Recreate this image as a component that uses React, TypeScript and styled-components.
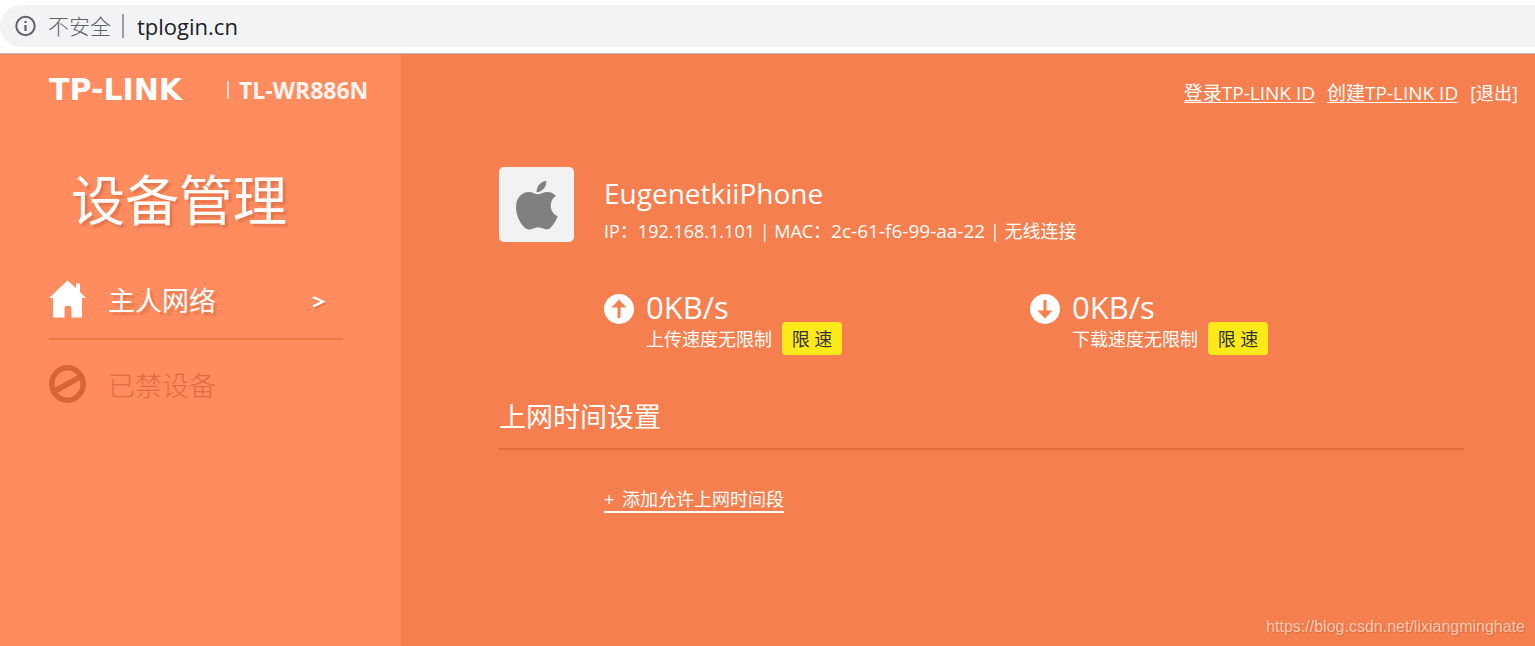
import React from "react";
import styled, { createGlobalStyle, css } from "styled-components";

const uiFont = '"Open Sans", "Noto Sans CJK SC", sans-serif';

const GlobalStyle = createGlobalStyle`
  *, *::before, *::after { box-sizing: border-box; }
  body {
    margin: 0;
    background: #fff;
    color: #fff;
    font-family: ${uiFont};
  }
  h1, h2, h3, p, ul { margin: 0; padding: 0; font-weight: 400; }
  ul { list-style: none; }
`;

const Page = styled.div`
  display: flex;
  flex-direction: column;
  min-height: 100vh;
`;

const BrowserBar = styled.header`
  padding: 5px 0 6px;
  border-bottom: 1px solid #b9bdc2;
`;

const AddressField = styled.div`
  display: flex;
  align-items: center;
  height: 42px;
  padding-left: 14px;
  border-radius: 21px 0 0 21px;
  background: #f1f3f5;
  color: #5f6368;
`;

const SecurityLabel = styled.label`
  padding: 0 11px 0 12px;
  font-size: 21px;
  font-weight: 300;
  line-height: 32px;
`;

const AddressDivider = styled.span`
  width: 2px;
  height: 24px;
  background: #9a9da1;
`;

const AddressInput = styled.input`
  flex: 1;
  min-width: 0;
  padding: 0 0 0 13px;
  border: 0;
  outline: 0;
  background: transparent;
  color: #202124;
  font: 400 22px/32px ${uiFont};
`;

const Body = styled.div`
  display: flex;
  flex: 1;
`;

const Sidebar = styled.aside`
  flex: 0 0 401px;
  padding: 22px 29px 0 49px;
  background: #ff8c5f;
`;

const Brand = styled.div`
  display: flex;
  align-items: center;
  height: 28px;
`;

const Logo = styled.span`
  flex: 0 0 178px;
  font: 700 30px/30px "DejaVu Sans", sans-serif;
`;

const BrandDivider = styled.span`
  width: 2px;
  height: 18px;
  margin-right: 10px;
  background: #ffd9c9;
`;

const Model = styled.span`
  font-size: 23px;
  font-weight: 700;
  line-height: 26px;
  white-space: nowrap;
  color: #fff4ef;
`;

const PageTitle = styled.h1`
  padding: 56px 0 0 22px;
  font-size: 54px;
  line-height: 80px;
  text-shadow: 3px 3px 2px #e8764c;
`;

const Menu = styled.ul`
  width: 294px;
  padding-top: 20px;
`;

const MenuItem = styled.li`
  & + & { border-top: 2px solid #f27645; }
`;

const MenuLink = styled.a<{ $muted?: boolean }>`
  display: flex;
  align-items: center;
  height: ${(p) => (p.$muted ? 88 : 78)}px;
  padding-right: 16px;
  color: #fff;
  font-size: 27px;
  line-height: 40px;
  text-decoration: none;
  text-shadow: 3px 3px 2px #e8764c;
  ${(p) =>
    p.$muted &&
    css`
      color: #e06d42;
      font-weight: 300;
      text-shadow: none;
    `}
`;

const MenuText = styled.span`
  flex: 1;
  padding: 4px 0 0 22px;
`;

const Main = styled.main`
  flex: 1;
  min-width: 0;
  padding: 23px 0 40px 98px;
  background: #f57f4e;
`;

const AccountNav = styled.nav`
  display: flex;
  justify-content: flex-end;
  gap: 12px;
  padding-right: 17px;
  line-height: 32px;
`;

const AccountLink = styled.a<{ $plain?: boolean }>`
  color: #fff;
  font-size: ${(p) => (p.$plain ? 18 : 19)}px;
  text-decoration: ${(p) => (p.$plain ? "none" : "underline")};
  text-decoration-thickness: 1px;
  text-underline-offset: 2px;
`;

const Content = styled.div`
  padding: 58px 71px 0 0;
`;

const Device = styled.section`
  display: flex;
  gap: 30px;
`;

const DeviceIcon = styled.div`
  display: flex;
  align-items: center;
  justify-content: center;
  width: 75px;
  height: 75px;
  border-radius: 5px;
  background: #f2f2f2;
`;

const DeviceName = styled.h2`
  padding: 6px 0 2px;
  font-size: 28px;
  line-height: 40px;
`;

const DeviceMeta = styled.p`
  font-size: 18px;
  line-height: 32px;
`;

const MacAddress = styled.span`
  font-size: 19px;
`;

const Speeds = styled.section`
  display: grid;
  grid-template-columns: 1fr 1fr;
  padding: 40px 8px 0 105px;
`;

const Speed = styled.div`
  display: flex;
  gap: 12px;
`;

const SpeedIcon = styled.svg`
  flex: none;
  margin-top: 7px;
`;

const SpeedValue = styled.p`
  font-size: 31px;
  line-height: 40px;
`;

const SpeedLimit = styled.div`
  display: flex;
  align-items: center;
  gap: 10px;
  margin-top: -5px;
  font-size: 18px;
  line-height: 32px;
`;

const LimitButton = styled.button`
  width: 60px;
  height: 33px;
  padding: 0;
  border: 0;
  border-radius: 4px;
  background: #fbe91a;
  color: #333;
  font: 400 18px/32px ${uiFont};
  cursor: pointer;
`;

const SectionTitle = styled.h3`
  margin-top: 41px;
  padding-bottom: 10px;
  border-bottom: 2px solid #e26b3c;
  font-size: 27px;
  line-height: 42px;
`;

const AddPeriod = styled.a`
  display: inline-block;
  margin: 37px 0 0 105px;
  border-bottom: 2px solid #fff;
  color: #fff;
  font-size: 18px;
  line-height: 24px;
  text-decoration: none;
`;

const Plus = styled.span`
  margin-right: 3px;
`;

const Watermark = styled.span`
  position: absolute;
  right: 10px;
  top: 617px;
  color: #fbcab5;
  font: 400 16px/20px "Liberation Sans", sans-serif;
  text-shadow: 1px 1px 1px #d9693c;
`;

const InfoIcon = () => (
  <svg width="22" height="22" viewBox="0 0 22 22" fill="none" aria-hidden="true">
    <circle cx="11.500" cy="11" r="9.200" stroke="#5f6368" strokeWidth="2" />
    <path d="M11.500 10v6M11.500 6v2" stroke="#5f6368" strokeWidth="2.2" />
  </svg>
);

const HomeIcon = () => (
  <svg width="37" height="38" viewBox="0 0 37 38" fill="#fff" aria-hidden="true">
    <path d="M18.5 0.500 27 8V3.500h4v8.500l6 6h-4v19.500H22.500V28q0-2-2-2h-3q-2 0-2 2v9.500H4V18H0Z" />
  </svg>
);

const ForbiddenIcon = () => (
  <svg width="37" height="38" viewBox="0 0 37 38" fill="none" aria-hidden="true">
    <ellipse cx="18.5" cy="19" rx="15.700" ry="16.200" stroke="#d96537" strokeWidth="5.5" />
    <path d="M6 26 31 12" stroke="#d96537" strokeWidth="6" />
  </svg>
);

const ChevronIcon = () => (
  <svg width="15" height="22" viewBox="0 -6 15 22" fill="none" aria-hidden="true">
    <path d="m3 5 10 4.700L3 14.500" stroke="#e8764c" strokeWidth="2" />
    <path d="m1 3 10 4.700L1 12.500" stroke="#fff" strokeWidth="2.400" />
  </svg>
);

const AppleIcon = () => (
  <svg width="42" height="50" viewBox="0 0 42 50" fill="#808080" aria-hidden="true">
    <path d="M20.6 12.300C20.1 6.500 24.900 1.500 30.200.700 30.900 6.500 26.2 12.100 20.6 12.300Z" />
    <path d="M21.8 14.200C24 14.200 27.2 11.900 31.4 11.900c3.4 0 6.600 1.500 8.500 4.200C36.600 18.200 34.700 21.500 34.700 25.400c0 5 2.900 9 7 10.700C40.200 40.800 37.400 45 34.600 47.700 32.900 49.300 31.100 49.800 28.800 48.900 26.700 48 24.500 47.400 22.200 47.400c-2.400 0-4.300.700-6.400 1.600C12.500 50.300 10.200 49.400 7.800 46.800 2.900 41.700 0 33.700 0 27 0 18.300 5.300 11.900 12.700 11.900c4 0 6.900 2.300 9.100 2.300Z" />
  </svg>
);

const ArrowIcon = ({ down }: { down?: boolean }) => (
  <SpeedIcon width="30" height="30" viewBox="0 0 30 30" aria-hidden="true">
    <circle cx="15" cy="15" r="15" fill="#fff" />
    <path
      d="M15 5.500 22.500 13.500H16.500V24H13.500V13.500H7.500Z"
      fill="#f57f4e"
      transform={down ? "rotate(180 15 15)" : undefined}
    />
  </SpeedIcon>
);

const SpeedBlock = ({ label, down }: { label: string; down?: boolean }) => (
  <Speed>
    <ArrowIcon down={down} />
    <div>
      <SpeedValue>0KB/s</SpeedValue>
      <SpeedLimit>
        <span>{label}</span>
        <LimitButton type="button">限 速</LimitButton>
      </SpeedLimit>
    </div>
  </Speed>
);

export default function App() {
  return (
    <Page>
      <GlobalStyle />
      <BrowserBar>
        <AddressField>
          <InfoIcon />
          <SecurityLabel htmlFor="address">不安全</SecurityLabel>
          <AddressDivider />
          <AddressInput id="address" type="text" defaultValue="tplogin.cn" />
        </AddressField>
      </BrowserBar>
      <Body>
        <Sidebar>
          <Brand>
            <Logo>TP-LINK</Logo>
            <BrandDivider />
            <Model>TL-WR886N</Model>
          </Brand>
          <PageTitle>设备管理</PageTitle>
          <Menu>
            <MenuItem>
              <MenuLink href="#host">
                <HomeIcon />
                <MenuText>主人网络</MenuText>
                <ChevronIcon />
              </MenuLink>
            </MenuItem>
            <MenuItem>
              <MenuLink href="#blocked" $muted>
                <ForbiddenIcon />
                <MenuText>已禁设备</MenuText>
              </MenuLink>
            </MenuItem>
          </Menu>
        </Sidebar>
        <Main>
          <AccountNav>
            <AccountLink href="#login">登录TP-LINK ID</AccountLink>
            <AccountLink href="#create">创建TP-LINK ID</AccountLink>
            <AccountLink href="#logout" $plain>[退出]</AccountLink>
          </AccountNav>
          <Content>
            <Device>
              <DeviceIcon>
                <AppleIcon />
              </DeviceIcon>
              <div>
                <DeviceName>EugenetkiiPhone</DeviceName>
                <DeviceMeta>
                  IP：192.168.1.101 | MAC：<MacAddress>2c-61-f6-99-aa-22</MacAddress> | 无线连接
                </DeviceMeta>
              </div>
            </Device>
            <Speeds>
              <SpeedBlock label="上传速度无限制" />
              <SpeedBlock label="下载速度无限制" down />
            </Speeds>
            <SectionTitle>上网时间设置</SectionTitle>
            <AddPeriod href="#add">
              <Plus>+</Plus> 添加允许上网时间段
            </AddPeriod>
          </Content>
        </Main>
      </Body>
      <Watermark>https://blog.csdn.net/lixiangminghate</Watermark>
    </Page>
  );
}
